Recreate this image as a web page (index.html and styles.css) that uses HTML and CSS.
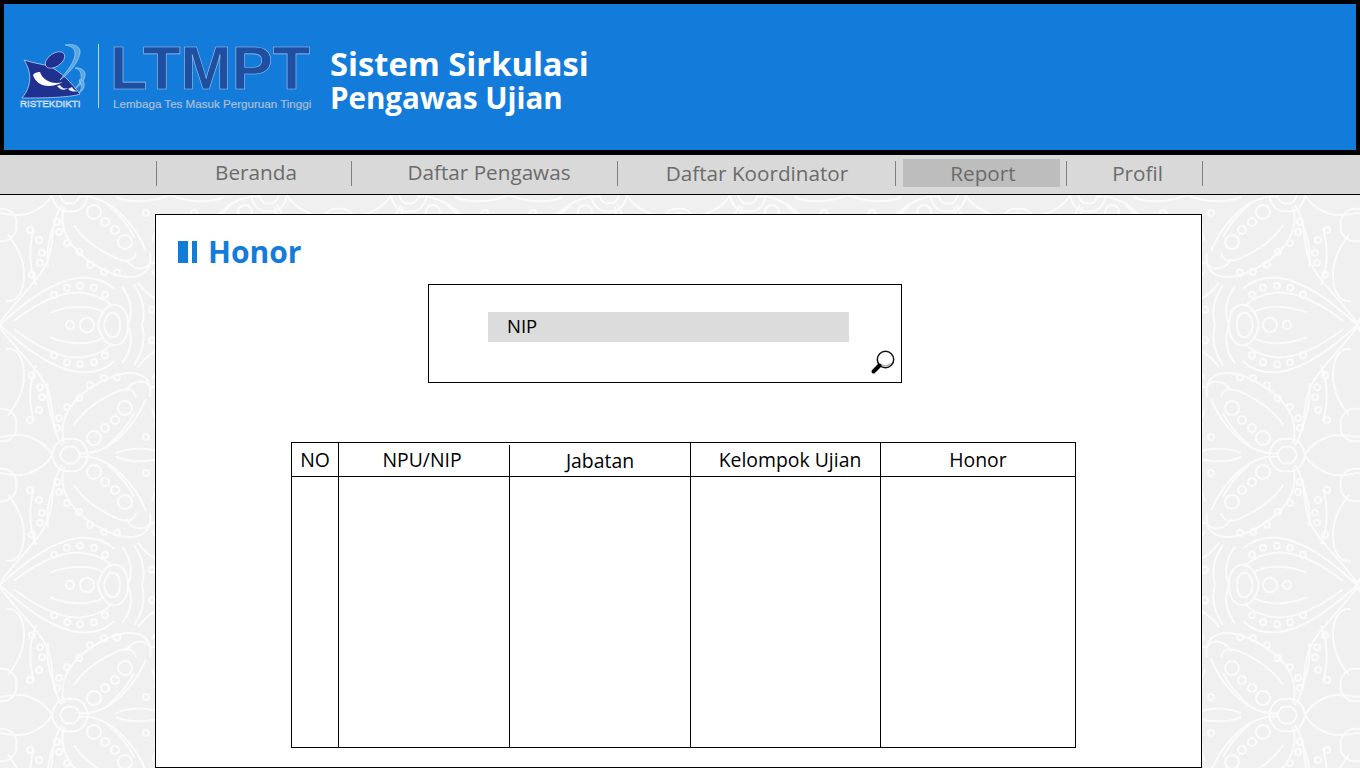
FILE: index.html
```html
<!DOCTYPE html>
<html lang="en">
<head>
    <meta charset="UTF-8">
    <meta name="viewport" content="width=device-width, initial-scale=1.0">
    <title>Sistem Sirkulasi Pengawas Ujian</title>
    <link rel="stylesheet" href="styles.css">
</head>
<body>

<header class="site-header">
    <div class="brand-ristek">
        <svg class="ristek-mark" width="66" height="54" viewBox="0 0 66 54" aria-hidden="true">
            <path d="M5 16 C14 19 22 20 30 22 C42 28 52 38 61 50 C52 53 34 54 3 54 C13 42 13 28 5 16 Z" fill="#20308f" stroke="#cfe3f7" stroke-width=".7"/>
            <ellipse cx="36" cy="16" rx="11" ry="6.5" transform="rotate(-35 36 16)" fill="#20308f" stroke="#cfe3f7" stroke-width=".6"/>
            <path d="M14 31 C17 41 29 46 44 38 C34 41 24 37 21 28 C18 28 15 29 14 31 Z" fill="#fff"/>
            <path d="M38 42 C41 46 45 47 49 44 C45 45 43 44 41 41 Z M49 45 C52 48 56 48 59 47 C56 47 54 45 53 43 Z" fill="#e8f0fa"/>
            <path d="M46 1 C56 -1 62 3 61 9 C59 20 49 30 41 36 C47 28 56 18 56 10 C56 4 52 2 46 1 Z" fill="#5aa7df" stroke="#cfe3f7" stroke-width=".5"/>
            <path d="M56 24 C62 23 67 27 66 32 C65 38 60 42 56 45 C60 40 63 35 62 31 C62 28 60 25 56 24 Z" fill="#5aa7df" stroke="#cfe3f7" stroke-width=".5"/>
            <path d="M60 36 C64 35 66 39 65 43 C64 46 62 48 60 49 C62 46 63 43 62 41 C62 39 61 37 60 36 Z" fill="#5aa7df" stroke="#cfe3f7" stroke-width=".5"/>
        </svg>
        <span class="ristek-name">RISTEKDIKTI</span>
    </div>
    <div class="brand-rule"></div>
    <div class="brand-ltmpt">
        <div class="ltmpt-name">LTMPT</div>
        <div class="ltmpt-sub">Lembaga Tes Masuk Perguruan Tinggi</div>
    </div>
    <div class="site-title">
        <div class="title-main">Sistem Sirkulasi</div>
        <div class="title-sub">Pengawas Ujian</div>
    </div>
</header>

<nav class="main-nav">
    <a class="nav-item nav-beranda" href="#">Beranda</a>
    <a class="nav-item nav-pengawas" href="#">Daftar Pengawas</a>
    <a class="nav-item nav-koordinator" href="#">Daftar Koordinator</a>
    <a class="nav-item nav-report" href="#"><span class="nav-active">Report</span></a>
    <a class="nav-item nav-profil" href="#">Profil</a>
</nav>

<main class="content-card">
    <h1 class="page-title"><span class="title-bar"></span><span class="title-bar-thin"></span>Honor</h1>

    <form class="search-box">
        <div class="search-field">NIP</div>
        <svg class="search-icon" width="26" height="26" viewBox="0 0 26 26" aria-label="Cari">
            <circle cx="15.5" cy="10.5" r="8.2" fill="#fff" stroke="#111" stroke-width="1.5"/>
            <path d="M10.5 15 A7 7 0 0 0 20.5 14.5" fill="none" stroke="#aaa" stroke-width="1.3"/>
            <path d="M9.5 16.5 L3.5 22.5" stroke="#000" stroke-width="4" stroke-linecap="round"/>
        </svg>
    </form>

    <table class="honor-table">
        <colgroup>
            <col class="col-no">
            <col class="col-nip">
            <col class="col-jabatan">
            <col class="col-kelompok">
            <col class="col-honor">
        </colgroup>
        <thead>
            <tr>
                <th>NO</th>
                <th class="th-nip">NPU/NIP</th>
                <th class="th-jabatan">Jabatan</th>
                <th class="th-kelompok">Kelompok Ujian</th>
                <th class="th-honor">Honor</th>
            </tr>
        </thead>
        <tbody>
            <tr>
                <td></td>
                <td></td>
                <td></td>
                <td></td>
                <td></td>
            </tr>
        </tbody>
    </table>
</main>

</body>
</html>
```
FILE: styles.css
```css
/* General Styling */
* {
    box-sizing: border-box;
    margin: 0;
    padding: 0;
}

html, body {
    height: 768px;
    overflow: hidden;
}

body {
    font-family: "Open Sans", "Noto Sans", sans-serif;
    background-color: #f0f0f0;
    background-position: 0 65px;
    background-size: 339.25px 260px;
    background-image: url("data:image/svg+xml,%3Csvg xmlns='http://www.w3.org/2000/svg' xmlns:xlink='http://www.w3.org/1999/xlink' width='340' height='260' viewBox='0 0 340 260'%3E%3Cdefs%3E%3Cg id='q' fill='none' stroke='%23fbfbfb' stroke-width='2'%3E%3Cpath d='M0 0C20 18 50 44 80 47C95 48 106 44 114 36'/%3E%3Cpath d='M14 4C35 20 60 34 82 32C96 30 106 26 112 18'/%3E%3Cpath d='M50 12C70 20 92 20 104 12'/%3E%3Cpath d='M128 0C128 10 124 20 114 20C106 20 100 10 98 0'/%3E%3Cpath d='M120 0C120 6 118 12 112 12C108 12 105 6 104 0'/%3E%3Ccircle cx='87' r='7'/%3E%3Ccircle cx='70' r='4'/%3E%3Ccircle cx='54' cy='30' r='3'/%3E%3Ccircle cx='67' cy='37' r='3'/%3E%3Ccircle cx='80' cy='39' r='3'/%3E%3Ccircle cx='94' cy='37' r='3'/%3E%3Ccircle cx='105' cy='30' r='3'/%3E%3Cpath d='M0 2C20 30 46 50 50 72C54 90 52 106 62 120'/%3E%3Cpath d='M64 118C58 96 70 78 86 66C100 56 118 46 134 48C148 50 152 60 150 72'/%3E%3Cpath d='M78 128C92 130 108 124 122 110C136 96 142 84 146 74'/%3E%3Cpath d='M74 100C84 84 100 74 118 66C128 62 134 64 136 72'/%3E%3Cpath d='M108 120C120 110 128 100 134 88'/%3E%3Ccircle cx='94' cy='113' r='7'/%3E%3Ccircle cx='105' cy='103' r='4'/%3E%3Ccircle cx='115' cy='95' r='4'/%3E%3Ccircle cx='125' cy='83' r='7'/%3E%3Ccircle cx='57' cy='103' r='3'/%3E%3Ccircle cx='59' cy='93' r='3'/%3E%3Ccircle cx='67' cy='82' r='3'/%3E%3Ccircle cx='79' cy='73' r='3'/%3E%3Ccircle cx='90' cy='60' r='3'/%3E%3Ccircle cx='104' cy='53' r='3'/%3E%3Ccircle cx='117' cy='52' r='3'/%3E%3Ccircle cx='30' cy='95' r='3'/%3E%3Ccircle cx='39' cy='85' r='3'/%3E%3Ccircle cx='42' cy='72' r='3'/%3E%3Ccircle cx='40' cy='62' r='3'/%3E%3Ccircle cx='32' cy='50' r='3'/%3E%3Cpath d='M52 130C54 118 62 112 70 114C78 112 86 118 88 130'/%3E%3Cpath d='M60 130C62 124 66 120 70 122C74 120 78 124 80 130'/%3E%3Cpath d='M6 24C18 22 24 34 24 50C24 66 16 80 8 90'/%3E%3Cpath d='M0 112C10 110 22 108 30 112C44 118 50 126 52 130'/%3E%3Cpath d='M36 40C30 56 28 76 34 96'/%3E%3Cpath d='M48 58C46 70 48 84 54 100'/%3E%3Cpath d='M0 84C10 82 18 92 16 100C18 108 10 118 0 116'/%3E%3Cpath d='M126 66C132 54 146 54 150 62C160 60 166 72 158 84'/%3E%3Cpath d='M170 20C156 24 146 30 138 42'/%3E%3Cpath d='M170 40C162 42 156 46 152 54'/%3E%3Cpath d='M170 110C160 104 156 96 152 84'/%3E%3Cpath d='M170 130C150 122 130 122 116 128'/%3E%3Cpath d='M128 0C134 14 130 28 122 38'/%3E%3Cpath d='M142 0C146 14 142 28 134 40'/%3E%3Ccircle cx='152' cy='15' r='3'/%3E%3Ccircle cx='160' cy='32' r='3'/%3E%3Ccircle cx='158' cy='100' r='3'/%3E%3Ccircle cx='146' cy='112' r='3'/%3E%3C/g%3E%3C/defs%3E%3Cuse xlink:href='%23q'/%3E%3Cuse xlink:href='%23q' transform='matrix(-1 0 0 1 340 0)'/%3E%3Cuse xlink:href='%23q' transform='matrix(1 0 0 -1 0 260)'/%3E%3Cuse xlink:href='%23q' transform='matrix(-1 0 0 -1 340 260)'/%3E%3C/svg%3E");
}

/* Header */
.site-header {
    display: flex;
    align-items: flex-start;
    height: 155px;
    background: #137cdb;
    border: 4px solid #000;
    border-bottom-width: 5px;
}

.brand-ristek {
    width: 66px;
    margin: 40px 0 0 15px;
    display: flex;
    flex-direction: column;
    align-items: flex-start;
}

.ristek-mark {
    flex: none;
    overflow: visible;
}

.ristek-name {
    font-family: "Liberation Sans", sans-serif;
    font-size: 9.8px;
    line-height: 12px;
    padding-left: 1px;
    color: #4a86c8;
    -webkit-text-stroke: .5px #e6effa;
    white-space: nowrap;
}

.brand-rule {
    width: 1px;
    height: 64px;
    margin: 40px 0 0 13px;
    background: #c3cfdd;
}

.brand-ltmpt {
    width: 200px;
    margin: 35px 0 0 14px;
}

.ltmpt-name {
    font-family: "Liberation Sans", sans-serif;
    font-size: 61.5px;
    font-weight: 700;
    line-height: 58px;
    margin-left: -3px;
    color: #1f4fa0;
    -webkit-text-stroke: .6px #9fc0e6;
    white-space: nowrap;
}

.ltmpt-sub {
    font-family: "Liberation Sans", sans-serif;
    font-size: 11.6px;
    line-height: 14px;
    color: #aebfd6;
    -webkit-text-stroke: .2px #aebfd6;
    white-space: nowrap;
}

.site-title {
    margin: 41px 0 0 17px;
    color: #fff;
    font-weight: 700;
    white-space: nowrap;
}

.title-main {
    font-size: 32.7px;
    line-height: 38px;
}

.title-sub {
    font-size: 29.5px;
    line-height: 29px;
}

/* Nav */
.main-nav {
    display: grid;
    grid-template-columns: 195px 266px 278px 171px 137px;
    height: 40px;
    padding-left: 156px;
    background: #d9d9d9;
    border-bottom: 1px solid #000;
}

.nav-item {
    display: flex;
    align-items: center;
    justify-content: center;
    height: 25px;
    margin-top: 6px;
    font-size: 20.7px;
    color: #6b6b6b;
    text-decoration: none;
    border-left: 1px solid #808080;
    padding-bottom: 4px;
}

.nav-profil {
    border-right: 1px solid #808080;
}

.nav-beranda { padding-left: 4px; }
.nav-pengawas { padding-left: 9px; }
.nav-koordinator { padding-left: 1px; padding-bottom: 2px; }
.nav-report { padding: 0; align-items: flex-start; }
.nav-profil { padding-left: 6px; padding-bottom: 1px; }

.nav-active {
    display: flex;
    align-items: center;
    justify-content: center;
    flex: none;
    width: 157px;
    height: 28px;
    margin: -2px 0 0 1px;
    padding: 0 0 0 3px;
    background: #bdbdbd;
}

/* Content */
.content-card {
    width: 1047px;
    height: 554px;
    margin: 19px 0 0 155px;
    background: #fff;
    border: 1px solid #000;
    overflow: hidden;
}

.page-title {
    display: flex;
    align-items: center;
    height: 42px;
    margin: 15px 0 0 22px;
    font-size: 30px;
    font-weight: 700;
    color: #137cdb;
}

.title-bar {
    width: 10px;
    height: 22px;
    margin: 2px 4px 0 0;
    background: #137cdb;
}

.title-bar-thin {
    width: 5px;
    height: 22px;
    margin: 2px 11px 0 0;
    background: #137cdb;
}

.search-box {
    display: flex;
    flex-direction: column;
    width: 474px;
    height: 99px;
    margin: 12px 0 0 272px;
    padding: 27px 0 0 59px;
    border: 1px solid #000;
}

.search-field {
    width: 361px;
    height: 30px;
    padding-left: 19px;
    font-size: 18.5px;
    line-height: 28px;
    color: #000;
    background: #dcdcdc;
}

.search-icon {
    align-self: flex-end;
    margin: 7px 5px 0 0;
}

/* Table */
.honor-table {
    width: 785px;
    height: 306px;
    margin: 59px 0 0 135px;
    border-collapse: collapse;
    table-layout: fixed;
}

.col-no { width: 47px; }
.col-nip { width: 171px; }
.col-jabatan { width: 181px; }
.col-kelompok { width: 190px; }
.col-honor { width: 195px; }

.honor-table th,
.honor-table td {
    border: 1px solid #000;
}

.honor-table th {
    height: 34px;
    font-size: 19.4px;
    font-weight: 400;
    color: #000;
}

.th-nip { padding-right: 4px; position: relative; }
.th-jabatan { padding-top: 2px; }
.th-kelompok { padding-left: 9px; }
.th-honor { padding-bottom: 1px; }

/* the line between NPU/NIP and Jabatan stops short of the top border */
.th-nip::after {
    content: "";
    position: absolute;
    top: 0;
    right: -1px;
    width: 1px;
    height: 2px;
    background: #fff;
}
```
